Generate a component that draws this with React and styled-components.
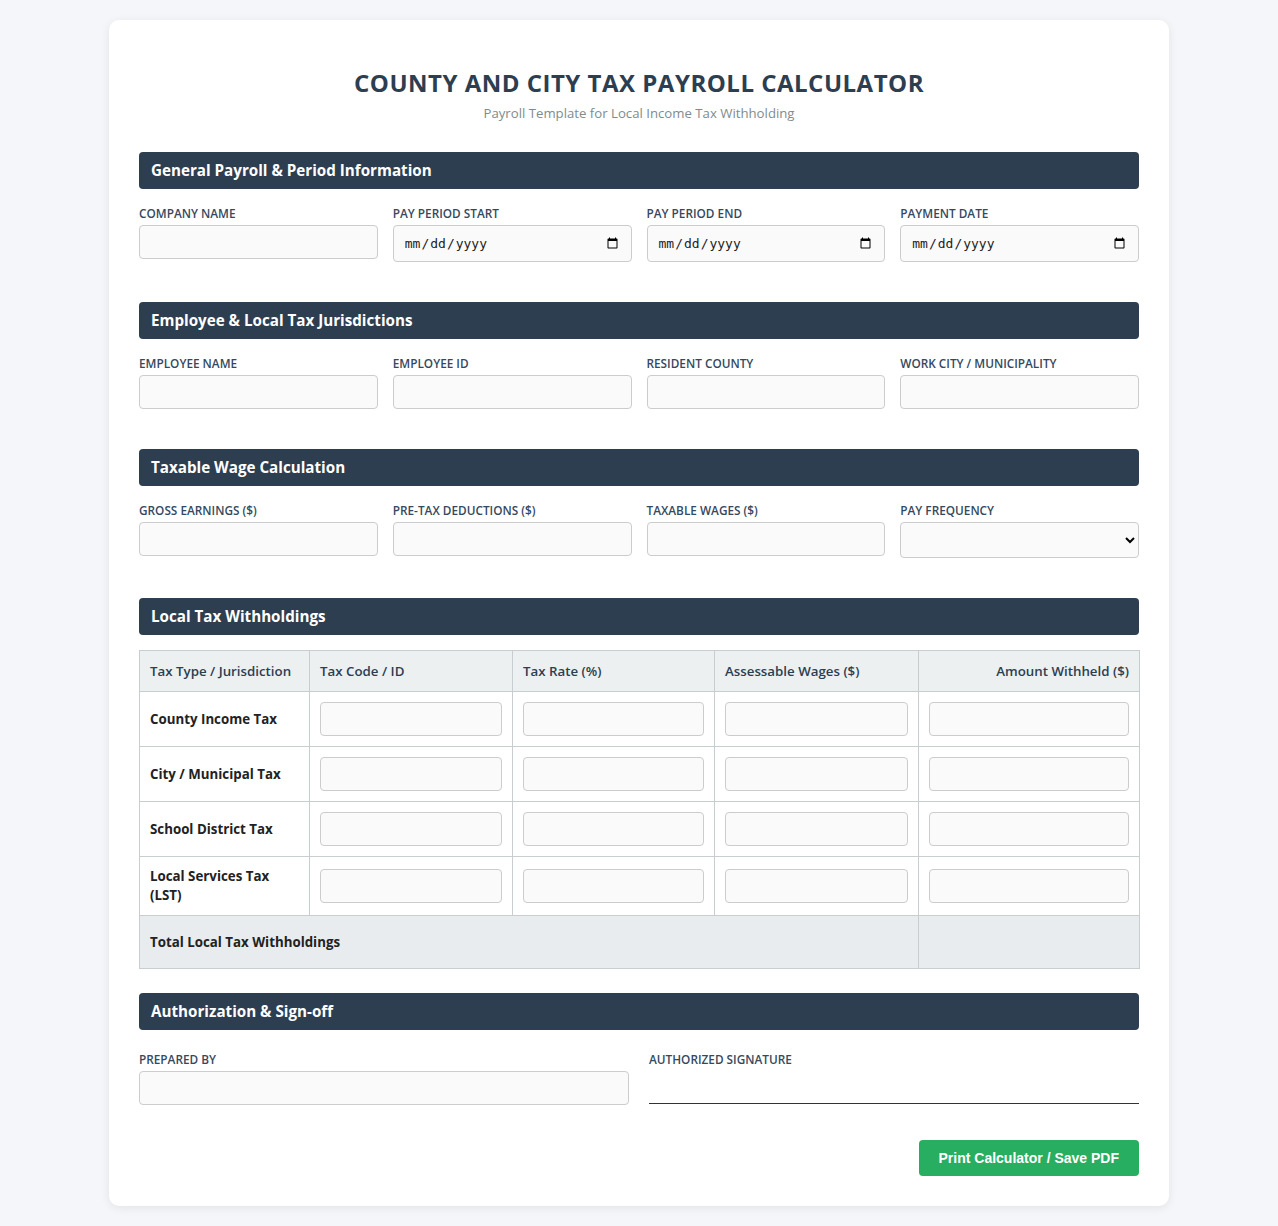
import React from 'react';
import styled, { createGlobalStyle } from 'styled-components';

const GlobalStyle = createGlobalStyle`
  body {
    margin: 0;
    padding: 20px 0;
    background: #f4f6f9;
    font-family: "Open Sans", "Noto Sans", sans-serif;
    color: #333;
  }
  * { box-sizing: border-box; }
`;

const Sheet = styled.div`
  width: 1060px;
  margin: 0 auto;
  background: #fff;
  border-radius: 10px;
  box-shadow: 0 2px 10px rgba(0, 0, 0, 0.08);
  padding: 30px;
`;

const Header = styled.header`
  text-align: center;
  margin: 18px 0 30px;
`;

const Title = styled.h1`
  margin: 0;
  font-size: 24px;
  font-weight: 700;
  letter-spacing: 0.5px;
  color: #2c3e50;
  text-transform: uppercase;
  line-height: 30px;
`;

const Subtitle = styled.p`
  margin: 6px 0 0;
  font-size: 13.2px;
  line-height: 18px;
  color: #7f8c8d;
`;

const Section = styled.section`
  margin-bottom: ${p => p.$gap ?? 40}px;
`;

const SectionTitle = styled.h2`
  margin: 0 0 15px;
  background: #2c3e50;
  color: #fff;
  font-size: 15.2px;
  font-weight: 700;
  height: 37px;
  line-height: 37px;
  padding: 0 12px;
  border-radius: 4px;
`;

const Grid = styled.div`
  display: grid;
  grid-template-columns: repeat(${p => p.$cols}, 1fr);
  column-gap: ${p => p.$gap ?? 15}px;
  align-items: start;
  padding-top: ${p => p.$top ?? 0}px;
`;

const Field = styled.div`
  display: flex;
  flex-direction: column;
`;

const Label = styled.label`
  font-size: 11.8px;
  font-weight: 600;
  color: #34495e;
  text-transform: uppercase;
  margin-bottom: 3px;
  line-height: 18px;
`;

const Input = styled.input`
  width: 100%;
  height: ${p => (p.type === 'date' ? 37 : 34)}px;
  border: 1px solid #ccc;
  border-radius: 4px;
  background: #fafafa;
  padding: 0 10px;
  font-size: ${p => (p.type === 'date' ? 13 : 14)}px;
  font-family: ${p => (p.type === 'date' ? '"DejaVu Sans Mono", monospace' : 'inherit')};
  color: #222;
`;

const Select = styled.select`
  width: 100%;
  height: 36px;
  border: 1px solid #ccc;
  border-radius: 4px;
  background: #fafafa;
  padding: 0 8px;
  font-size: 14px;
`;

const Table = styled.table`
  width: 100%;
  border-collapse: collapse;
  table-layout: fixed;
  font-size: 13.3px;
`;

const Th = styled.th`
  width: ${p => p.$w}px;
  background: #ecf0f1;
  border: 1px solid #c8cdd0;
  padding: 0 10px;
  height: 41px;
  font-weight: 600;
  color: #2c3e50;
  text-align: ${p => (p.$right ? 'right' : 'left')};
`;

const Td = styled.td`
  border: 1px solid #c8cdd0;
  padding: 10px;
  height: 55px;
  vertical-align: middle;
`;

const RowLabel = styled(Td)`
  font-weight: 700;
  color: #222;
  line-height: 19px;
`;

const TotalCell = styled.td`
  background: #e8ecee;
  border: 1px solid #c8cdd0;
  padding: 0 10px;
  height: 53px;
  font-weight: 700;
  color: #222;
`;

const SignatureLine = styled.div`
  height: 33px;
  border-bottom: 1px solid #333;
`;

const Actions = styled.div`
  display: flex;
  justify-content: flex-end;
  margin-top: 35px;
`;

const PrintButton = styled.button`
  background: #27ae60;
  color: #fff;
  border: none;
  border-radius: 4px;
  height: 36px;
  padding: 0 20px;
  font-family: "Liberation Sans", Arial, sans-serif;
  font-size: 14px;
  font-weight: 700;
  cursor: pointer;
`;

const columns = [
  { title: 'Tax Type / Jurisdiction', w: 170 },
  { title: 'Tax Code / ID', w: 203 },
  { title: 'Tax Rate (%)', w: 202 },
  { title: 'Assessable Wages ($)', w: 204 },
  { title: 'Amount Withheld ($)', w: 221, right: true },
];

const taxRows = [
  'County Income Tax',
  'City / Municipal Tax',
  'School District Tax',
  'Local Services Tax (LST)',
];

function FieldBox({ label, type = 'text' }) {
  return (
    <Field>
      <Label>{label}</Label>
      <Input type={type} />
    </Field>
  );
}

export default function App() {
  return (
    <>
      <GlobalStyle />
      <Sheet>
        <Header>
          <Title>County and City Tax Payroll Calculator</Title>
          <Subtitle>Payroll Template for Local Income Tax Withholding</Subtitle>
        </Header>

        <Section>
          <SectionTitle>General Payroll &amp; Period Information</SectionTitle>
          <Grid $cols={4}>
            <FieldBox label="Company Name" />
            <FieldBox label="Pay Period Start" type="date" />
            <FieldBox label="Pay Period End" type="date" />
            <FieldBox label="Payment Date" type="date" />
          </Grid>
        </Section>

        <Section>
          <SectionTitle>Employee &amp; Local Tax Jurisdictions</SectionTitle>
          <Grid $cols={4}>
            <FieldBox label="Employee Name" />
            <FieldBox label="Employee ID" />
            <FieldBox label="Resident County" />
            <FieldBox label="Work City / Municipality" />
          </Grid>
        </Section>

        <Section>
          <SectionTitle>Taxable Wage Calculation</SectionTitle>
          <Grid $cols={4}>
            <FieldBox label="Gross Earnings ($)" />
            <FieldBox label="Pre-Tax Deductions ($)" />
            <FieldBox label="Taxable Wages ($)" />
            <Field>
              <Label>Pay Frequency</Label>
              <Select defaultValue="">
                <option value=""></option>
                <option>Weekly</option>
                <option>Bi-Weekly</option>
                <option>Semi-Monthly</option>
                <option>Monthly</option>
              </Select>
            </Field>
          </Grid>
        </Section>

        <Section $gap={24}>
          <SectionTitle>Local Tax Withholdings</SectionTitle>
          <Table>
            <thead>
              <tr>
                {columns.map(c => (
                  <Th key={c.title} $w={c.w} $right={c.right}>{c.title}</Th>
                ))}
              </tr>
            </thead>
            <tbody>
              {taxRows.map(name => (
                <tr key={name}>
                  <RowLabel>{name}</RowLabel>
                  <Td><Input /></Td>
                  <Td><Input /></Td>
                  <Td><Input /></Td>
                  <Td><Input /></Td>
                </tr>
              ))}
              <tr>
                <TotalCell colSpan={4}>Total Local Tax Withholdings</TotalCell>
                <TotalCell />
              </tr>
            </tbody>
          </Table>
        </Section>

        <Section $gap={0}>
          <SectionTitle>Authorization &amp; Sign-off</SectionTitle>
          <Grid $cols={2} $gap={20} $top={5}>
            <FieldBox label="Prepared By" />
            <Field>
              <Label>Authorized Signature</Label>
              <SignatureLine />
            </Field>
          </Grid>
        </Section>

        <Actions>
          <PrintButton>Print Calculator / Save PDF</PrintButton>
        </Actions>
      </Sheet>
    </>
  );
}
